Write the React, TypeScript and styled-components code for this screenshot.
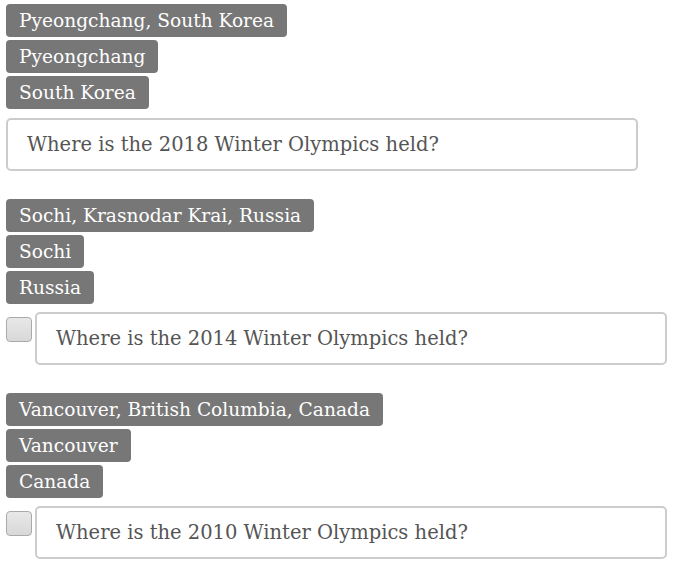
import React from 'react';
import styled, { createGlobalStyle } from 'styled-components';

const GlobalStyle = createGlobalStyle`
  body {
    margin: 0;
    padding: 4px 6px;
    background: #fff;
    font-family: 'DejaVu Serif', Georgia, serif;
  }
`

const Group = styled.div`
  display: flex;
  flex-direction: column;
  align-items: flex-start;
  gap: 3px;
  margin-bottom: 28px;
`

const Tag = styled.span`
  display: inline-block;
  background: #777;
  color: #fff;
  font-size: 18.6px;
  line-height: 25px;
  padding: 4px 13px;
  border-radius: 4px;
`

const Row = styled.div<{ $checkbox?: boolean }>`
  display: flex;
  align-items: flex-start;
  gap: 3px;
  margin-top: ${p => (p.$checkbox ? '5px' : '6px')};
`

const Check = styled.span`
  width: 24px;
  height: 23px;
  margin-top: 5px;
  border: 1px solid #aaa;
  border-radius: 4px;
  background: linear-gradient(#e8e8e8, #d8d8d8);
  box-sizing: content-box;
  flex: none;
`

const Question = styled.div`
  width: 632px;
  height: 53px;
  box-sizing: border-box;
  border: 2px solid #ccc;
  border-radius: 5px;
  padding: 0 19px;
  display: flex;
  align-items: center;
  color: #555;
  font-size: 19.5px;
`

const data = [
  { tags: ['Pyeongchang, South Korea', 'Pyeongchang', 'South Korea'], q: 'Where is the 2018 Winter Olympics held?', check: false },
  { tags: ['Sochi, Krasnodar Krai, Russia', 'Sochi', 'Russia'], q: 'Where is the 2014 Winter Olympics held?', check: true },
  { tags: ['Vancouver, British Columbia, Canada', 'Vancouver', 'Canada'], q: 'Where is the 2010 Winter Olympics held?', check: true },
]

const App = () => {
  return (
    <>
      <GlobalStyle />
      {data.map(g => (
        <Group key={g.q}>
          {g.tags.map(t => <Tag key={t}>{t}</Tag>)}
          <Row $checkbox={g.check}>
            {g.check && <Check />}
            <Question>{g.q}</Question>
          </Row>
        </Group>
      ))}
    </>
  );
};

export default App;
